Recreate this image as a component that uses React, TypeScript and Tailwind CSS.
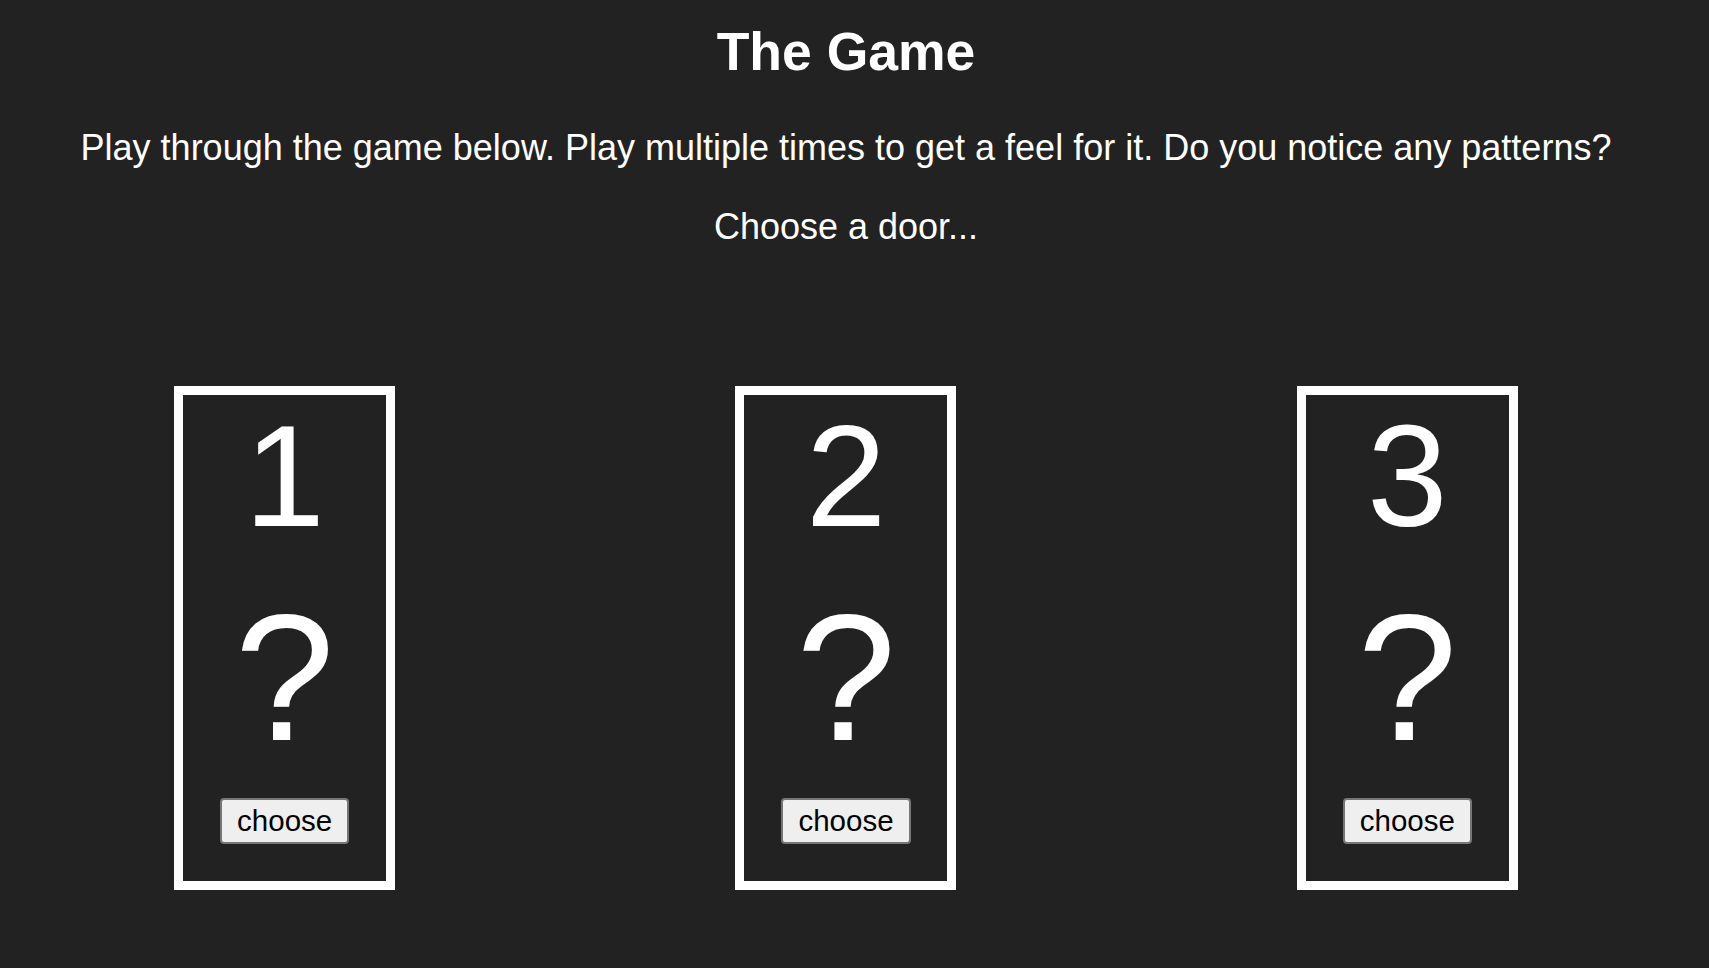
import React from "react";

function Door({ n }: { n: number }) {
  return (
    <div className="flex justify-center">
      <div className="flex h-[504px] w-[221px] flex-col items-center border-[9px] border-white">
        <div className="mt-[9px] text-[145px] leading-none">{n}</div>
        <div className="mt-[39px] text-[180px] leading-none">?</div>
        <button className="mt-[30px] rounded-[4px] border-2 border-[#767676] bg-[#efefef] px-[15px] py-[4px] text-[29.5px] leading-[34px] text-black">
          choose
        </button>
      </div>
    </div>
  );
}

export default function App() {
  return (
    <div
      className="min-h-[968px] w-full bg-[#222222] text-white"
      style={{ fontFamily: '"Liberation Sans", Arial, sans-serif' }}
    >
      <div className="flex flex-col items-center pr-[17px] text-center">
        <h1 className="mt-[25px] text-[53.5px] font-bold leading-none">The Game</h1>
        <p className="mt-[51px] text-[36px] leading-none">
          Play through the game below. Play multiple times to get a feel for it. Do you notice any patterns?
        </p>
        <p className="mt-[43px] text-[36px] leading-none">Choose a door...</p>
        <div className="mt-[141px] grid w-full grid-cols-3 px-[4px]">
          <Door n={1} />
          <Door n={2} />
          <Door n={3} />
        </div>
      </div>
    </div>
  );
}
